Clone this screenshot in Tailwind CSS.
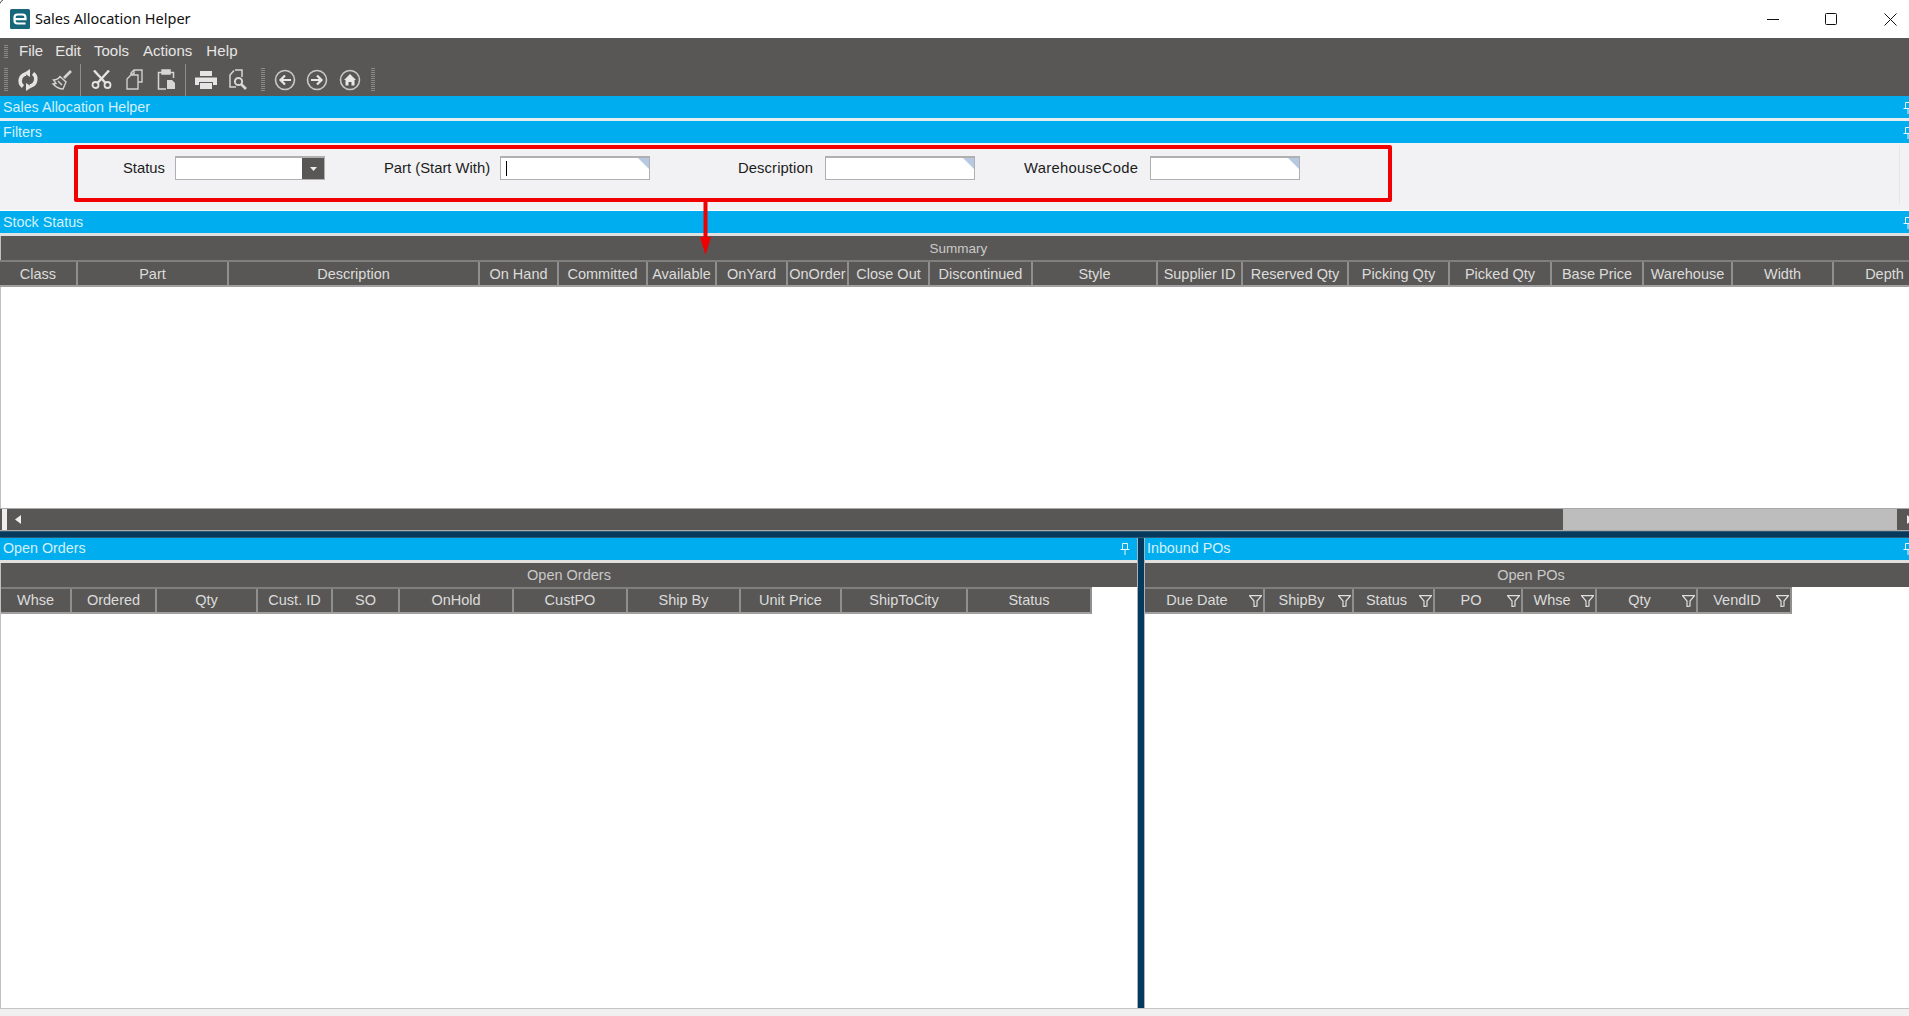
<!DOCTYPE html>
<html lang="en">
<head>
  <meta charset="UTF-8" />
  <title>Sales Allocation Helper</title>
  <script src="https://cdn.jsdelivr.net/npm/@tailwindcss/browser@4"></script>
</head>
<body class="bg-white font-['Liberation_Sans',Arial,sans-serif] text-[14.5px] overflow-hidden">
<div class="relative flex flex-col w-[1909px] h-[1016px] overflow-hidden">

  <!-- Title bar -->
  <header class="h-[38px] shrink-0 flex items-center bg-white">
    <svg class="ml-[10px] w-[20px] h-[20px]" viewBox="0 0 20 20">
      <rect width="20" height="20" rx="1.5" fill="#17667a"/>
      <path d="M15.500 14.500H7.500Q4.500 14.500 4.500 11.500V8.500Q4.500 5.500 7.500 5.500H12.500Q15.500 5.500 15.500 8.500V10.200H5" fill="none" stroke="#fff" stroke-width="2.2"/>
    </svg>
    <span class="ml-[5px] font-['Noto_Sans',sans-serif] text-[14.5px] text-[#111]">Sales Allocation Helper</span>
    <div class="ml-auto flex items-center">
      <svg class="w-[12px] h-[12px] mr-[46px]" viewBox="0 0 12 12"><path d="M0 6.500h12" stroke="#111" stroke-width="1"/></svg>
      <svg class="w-[12px] h-[12px] mr-[47px]" viewBox="0 0 12 12"><rect x=".5" y=".5" width="11" height="11" rx="1" fill="none" stroke="#111"/></svg>
      <svg class="w-[13px] h-[13px] mr-[12px]" viewBox="0 0 13 13"><path d="M.5.500l12 12M12.500.500l-12 12" stroke="#111"/></svg>
    </div>
  </header>
  <svg class="absolute left-0 top-0 w-[4px] h-[4px]" viewBox="0 0 4 4"><path d="M0 3.500Q.5 1 3 0" fill="none" stroke="#555"/></svg>

  <!-- Menu + toolbar -->
  <div class="h-[58px] shrink-0 bg-[#595755] text-[#e6e6e6]">
    <nav class="h-[25px] flex items-center pt-[2px] text-[15px]">
      <span class="ml-[4px] w-[4px] h-[14px] bg-[repeating-linear-gradient(#8a8a88_0_1px,transparent_1px_2px)]"></span>
      <span class="ml-[11px]">File</span>
      <span class="ml-[12px]">Edit</span>
      <span class="ml-[13px]">Tools</span>
      <span class="ml-[14px]">Actions</span>
      <span class="ml-[14px] tracking-[0.2px]">Help</span>
    </nav>
    <div class="h-[33px] flex items-center text-[#e4e4e4]">
      <span class="ml-[4px] w-[4px] h-[24px] bg-[repeating-linear-gradient(#8a8a88_0_1px,transparent_1px_2px)]"></span>
      <!-- refresh -->
      <span class="ml-[4px] w-[32px] flex justify-center">
        <svg class="w-[22px] h-[22px]" viewBox="0 0 22 22" fill="none" stroke="currentColor" stroke-width="3.6"><path d="M9 5A7 7 0 0 0 6 17.500"/><path d="M13 17A7 7 0 0 0 16 4.500"/><path d="M13 0v8L7 4zM9 22v-8l6 4z" fill="currentColor" stroke="none"/></svg>
      </span>
      <!-- broom -->
      <span class="ml-[2px] w-[32px] flex justify-center">
        <svg class="w-[22px] h-[22px]" viewBox="0 0 22 22" fill="none" stroke="#d4d4d4" stroke-width="1.400"><path d="M20 2l-7 7" stroke-width="2.600"/><path d="M9 7.500l6 5.500-3 7q-5 0-10-5l3-.5-2.500-3.500q4 0 6.500-3.500z"/><path d="M7 12l4 4" /></svg>
      </span>
      <span class="ml-[2px] w-px h-[32px] bg-[#8d8d8b]"></span>
      <!-- scissors -->
      <span class="ml-[4px] w-[32px] flex justify-center">
        <svg class="w-[21px] h-[19px]" viewBox="0 0 21 19" fill="none" stroke="currentColor" stroke-width="1.800"><path d="M3 .5l12 13M18 .5L6 13.500" stroke-width="2.400"/><circle cx="4.500" cy="15" r="3"/><circle cx="16.500" cy="15" r="3"/></svg>
      </span>
      <!-- copy -->
      <span class="ml-px w-[32px] flex justify-center">
        <svg class="w-[17px] h-[21px]" viewBox="0 0 17 21" fill="none" stroke="#cfcfcf" stroke-width="1.400"><path d="M5 6V4l3-3h8v12h-4"/><path d="M5 6h7v14H1V10z" fill="#595755"/><path d="M8 1v4H5"/></svg>
      </span>
      <!-- paste -->
      <span class="w-[32px] flex justify-center">
        <svg class="w-[19px] h-[21px]" viewBox="0 0 19 21" fill="none" stroke="#d6d6d6" stroke-width="1.500"><path d="M5 3.500H1.500V20H9M13 3.500h3.500V9"/><rect x="5" y="1" width="8" height="4" fill="#d6d6d6"/><path d="M10 11h5l3 3v6h-8z" fill="#d6d6d6" stroke="none"/></svg>
      </span>
      <span class="ml-[3px] w-px h-[32px] bg-[#8d8d8b]"></span>
      <!-- printer -->
      <span class="ml-[4px] w-[32px] flex justify-center">
        <svg class="w-[22px] h-[20px]" viewBox="0 0 22 20" fill="currentColor"><rect x="5" y="1" width="12" height="5"/><path d="M0 7.500h22V15h-4v-3H4v3H0z"/><rect x="5" y="13" width="12" height="6"/></svg>
      </span>
      <!-- print preview -->
      <span class="w-[32px] flex justify-center">
        <svg class="w-[20px] h-[22px]" viewBox="0 0 20 22" fill="none" stroke="#d6d6d6" stroke-width="1.500"><path d="M7 1h7v7M6 1.500L2 6v12h6"/><circle cx="10.500" cy="12.500" r="3.600" stroke-width="2"/><path d="M13 15l5 5" stroke-width="2.600"/></svg>
      </span>
      <span class="ml-[7px] w-[4px] h-[24px] bg-[repeating-linear-gradient(#8a8a88_0_1px,transparent_1px_2px)]"></span>
      <!-- back -->
      <span class="ml-[4px] w-[32px] flex justify-center">
        <svg class="w-[22px] h-[22px]" viewBox="0 0 22 22" fill="none" stroke="#c9c9c9"><circle cx="11" cy="11" r="9.500" stroke-width="1.600"/><path d="M17 11H7M11 6.500L6.500 11l4.500 4.500" stroke="#e8e8e8" stroke-width="2.200"/></svg>
      </span>
      <!-- forward -->
      <span class="w-[32px] flex justify-center">
        <svg class="w-[22px] h-[22px]" viewBox="0 0 22 22" fill="none" stroke="#c9c9c9"><circle cx="11" cy="11" r="9.500" stroke-width="1.600"/><path d="M5 11h10M11 6.500l4.500 4.500-4.500 4.500" stroke="#e8e8e8" stroke-width="2.200"/></svg>
      </span>
      <!-- home -->
      <span class="ml-px w-[32px] flex justify-center">
        <svg class="w-[22px] h-[22px]" viewBox="0 0 22 22" fill="none" stroke="#c9c9c9"><circle cx="11" cy="11" r="9.500" stroke-width="1.600"/><path d="M11 5l6 6h-1.500v5.500h-3V13h-3v3.500h-3V11H5z" fill="#e8e8e8" stroke="none"/></svg>
      </span>
      <span class="ml-[5px] w-[4px] h-[24px] bg-[repeating-linear-gradient(#8a8a88_0_1px,transparent_1px_2px)]"></span>
    </div>
  </div>

  <!-- Sales Allocation Helper bar -->
  <div class="h-[22px] shrink-0 bg-[#00aeef] text-[#d4f0fb] pl-[3px] pt-px text-[14.3px] flex items-center justify-between">
    <span>Sales Allocation Helper</span>
    <svg class="w-[10px] h-[12px] mr-[-4px]" viewBox="0 0 10 12" fill="none" stroke="#e8f8ff"><path d="M2.500.5h5v6h-5zM.5 6.500h9M5 7v5"/></svg>
  </div>
  <div class="h-[3px] shrink-0 bg-[#e6eef2]"></div>

  <!-- Filters -->
  <div class="h-[22px] shrink-0 bg-[#00aeef] text-[#d4f0fb] pl-[3px] pt-px text-[14.3px] flex items-center justify-between">
    <span>Filters</span>
    <svg class="w-[10px] h-[12px] mr-[-4px]" viewBox="0 0 10 12" fill="none" stroke="#e8f8ff"><path d="M2.500.5h5v6h-5zM.5 6.500h9M5 7v5"/></svg>
  </div>
  <div class="h-[67px] shrink-0 bg-[#f2f2f4] flex items-start pt-[13px] text-[#1c1c1c] text-[14.8px] whitespace-nowrap">
    <span class="ml-[123px] w-[52px] h-[24px] leading-[25px]">Status</span>
    <div class="w-[150px] h-[24px] bg-white border border-[#b0b0b0] border-t-2 flex justify-end">
      <span class="w-[22px] h-full bg-[#595755] flex items-center justify-center"><svg class="w-[7px] h-[4px]" viewBox="0 0 7 4"><path d="M0 0h7L3.500 4z" fill="#eee"/></svg></span>
    </div>
    <span class="ml-[59px] w-[116px] h-[24px] leading-[25px]">Part (Start With)</span>
    <div class="relative w-[150px] h-[24px] bg-white border border-[#b0b0b0] border-t-2">
      <span class="absolute left-[5px] top-[3px] w-px h-[15px] bg-black"></span>
      <span class="absolute right-0 top-0 w-[11px] h-[11px] bg-[#b7c9e2] [clip-path:polygon(0_0,100%_0,100%_100%)]"></span>
    </div>
    <span class="ml-[88px] w-[87px] h-[24px] leading-[25px] tracking-[0.1px]">Description</span>
    <div class="relative w-[150px] h-[24px] bg-white border border-[#b0b0b0] border-t-2">
      <span class="absolute right-0 top-0 w-[11px] h-[11px] bg-[#b7c9e2] [clip-path:polygon(0_0,100%_0,100%_100%)]"></span>
    </div>
    <span class="ml-[49px] w-[126px] h-[24px] leading-[25px] tracking-[0.3px]">WarehouseCode</span>
    <div class="relative w-[150px] h-[24px] bg-white border border-[#b0b0b0] border-t-2">
      <span class="absolute right-0 top-0 w-[11px] h-[11px] bg-[#b7c9e2] [clip-path:polygon(0_0,100%_0,100%_100%)]"></span>
    </div>
    <span class="ml-[599px] mt-[-11px] w-px h-[60px] bg-[#e6e6e8]"></span>
  </div>

  <!-- Stock Status -->
  <div class="mt-px h-[22px] shrink-0 bg-[#00aeef] text-[#d4f0fb] pl-[3px] pt-px text-[14.3px] flex items-center justify-between">
    <span>Stock Status</span>
    <svg class="w-[10px] h-[12px] mr-[-4px]" viewBox="0 0 10 12" fill="none" stroke="#e8f8ff"><path d="M2.500.5h5v6h-5zM.5 6.500h9M5 7v5"/></svg>
  </div>
  <div class="h-[3px] shrink-0 bg-[#e0e0e0]"></div>
  <div class="h-[24px] shrink-0 bg-[#595755] text-[#c9c9c9] text-[13.5px] pt-[3px] pl-[7px] flex items-center justify-center border-l border-[#c0c0c0]">Summary</div>
  <div class="h-[27px] shrink-0 flex bg-[#595755] text-[#dcdcdc] border-y-2 border-t-[#7f7f7e] border-b-[#a0a0a0] text-center leading-[24px] overflow-hidden whitespace-nowrap">
    <div class="w-[78px] shrink-0 border-r-2 border-[#8f8f8f]">Class</div>
    <div class="w-[151px] shrink-0 border-r-2 border-[#8f8f8f]">Part</div>
    <div class="w-[251px] shrink-0 border-r-2 border-[#8f8f8f]">Description</div>
    <div class="w-[79px] shrink-0 border-r-2 border-[#8f8f8f]">On Hand</div>
    <div class="w-[89px] shrink-0 border-r-2 border-[#8f8f8f]">Committed</div>
    <div class="w-[69px] shrink-0 border-r-2 border-[#8f8f8f]">Available</div>
    <div class="w-[71px] shrink-0 border-r-2 border-[#8f8f8f]">OnYard</div>
    <div class="w-[61px] shrink-0 border-r-2 border-[#8f8f8f]">OnOrder</div>
    <div class="w-[81px] shrink-0 border-r-2 border-[#8f8f8f]">Close Out</div>
    <div class="w-[103px] shrink-0 border-r-2 border-[#8f8f8f]">Discontinued</div>
    <div class="w-[125px] shrink-0 border-r-2 border-[#8f8f8f]">Style</div>
    <div class="w-[85px] shrink-0 border-r-2 border-[#8f8f8f]">Supplier ID</div>
    <div class="w-[106px] shrink-0 border-r-2 border-[#8f8f8f]">Reserved Qty</div>
    <div class="w-[101px] shrink-0 border-r-2 border-[#8f8f8f]">Picking Qty</div>
    <div class="w-[102px] shrink-0 border-r-2 border-[#8f8f8f]">Picked Qty</div>
    <div class="w-[92px] shrink-0 border-r-2 border-[#8f8f8f]">Base Price</div>
    <div class="w-[89px] shrink-0 border-r-2 border-[#8f8f8f]">Warehouse</div>
    <div class="w-[101px] shrink-0 border-r-2 border-[#8f8f8f]">Width</div>
    <div class="w-[101px] shrink-0">Depth</div>
  </div>
  <div class="h-[221px] shrink-0 bg-white border-l border-[#c0c0c0]"></div>

  <!-- Horizontal scrollbar -->
  <div class="h-[23px] shrink-0 flex bg-[#595755] border-y border-[#a8a8a8]">
    <span class="ml-[2px] w-[5px] shrink-0 bg-[#eeeeee]"></span>
    <svg class="ml-[8px] mt-[6px] w-[6px] h-[9px] shrink-0" viewBox="0 0 6 9"><path d="M6 0v9L0 4.500z" fill="#eee"/></svg>
    <span class="ml-[1542px] w-[334px] shrink-0 bg-[#bdbdbd]"></span>
    <svg class="ml-[10px] mt-[6px] w-[6px] h-[9px] shrink-0" viewBox="0 0 6 9"><path d="M0 0v9l6-4.500z" fill="#eee"/></svg>
  </div>
  <div class="h-[7px] shrink-0 bg-[#053a5c] border-y border-[#2f5a76]"></div>

  <!-- Bottom panes -->
  <div class="flex-1 flex min-h-0">
    <section class="w-[1137px] shrink-0 flex flex-col">
      <div class="h-[22px] shrink-0 bg-[#00aeef] text-[#d4f0fb] pl-[3px] text-[14.3px] flex items-center justify-between">
        <span>Open Orders</span>
        <svg class="w-[10px] h-[12px] mr-[7px]" viewBox="0 0 10 12" fill="none" stroke="#e8f8ff"><path d="M2.500.5h5v6h-5zM.5 6.500h9M5 7v5"/></svg>
      </div>
      <div class="h-[3px] shrink-0 bg-[#e0e0e0]"></div>
      <div class="h-[24px] shrink-0 bg-[#595755] text-[#c9c9c9] pt-px flex items-center justify-center border-l border-[#c0c0c0]">Open Orders</div>
      <div class="h-[27px] shrink-0 bg-white flex border-l border-[#c0c0c0]">
        <div class="w-[1091px] flex bg-[#595755] text-[#dcdcdc] border-y-2 border-t-[#7f7f7e] border-b-[#a0a0a0] text-center leading-[23px] border-r-2 border-r-[#8f8f8f]">
          <div class="w-[71px] shrink-0 border-r-2 border-[#8f8f8f]">Whse</div>
          <div class="w-[85px] shrink-0 border-r-2 border-[#8f8f8f]">Ordered</div>
          <div class="w-[101px] shrink-0 border-r-2 border-[#8f8f8f]">Qty</div>
          <div class="w-[75px] shrink-0 border-r-2 border-[#8f8f8f]">Cust. ID</div>
          <div class="w-[67px] shrink-0 border-r-2 border-[#8f8f8f]">SO</div>
          <div class="w-[114px] shrink-0 border-r-2 border-[#8f8f8f]">OnHold</div>
          <div class="w-[114px] shrink-0 border-r-2 border-[#8f8f8f]">CustPO</div>
          <div class="w-[113px] shrink-0 border-r-2 border-[#8f8f8f]">Ship By</div>
          <div class="w-[101px] shrink-0 border-r-2 border-[#8f8f8f]">Unit Price</div>
          <div class="w-[126px] shrink-0 border-r-2 border-[#8f8f8f]">ShipToCity</div>
          <div class="flex-1">Status</div>
        </div>
      </div>
      <div class="flex-1 bg-white border-l border-[#c0c0c0]"></div>
    </section>

    <!-- Splitter -->
    <div class="w-[8px] shrink-0 bg-[#053a5c] border-x border-[#a8b4bc]"></div>

    <section class="flex-1 min-w-0 flex flex-col">
      <div class="h-[22px] shrink-0 bg-[#00aeef] text-[#d4f0fb] pl-[2px] text-[14.3px] flex items-center justify-between">
        <span>Inbound POs</span>
        <svg class="w-[10px] h-[12px] mr-[-4px]" viewBox="0 0 10 12" fill="none" stroke="#e8f8ff"><path d="M2.500.5h5v6h-5zM.5 6.500h9M5 7v5"/></svg>
      </div>
      <div class="h-[3px] shrink-0 bg-[#e0e0e0]"></div>
      <div class="h-[24px] shrink-0 bg-[#595755] text-[#c9c9c9] pt-px pl-[8px] flex items-center justify-center">Open POs</div>
      <div class="h-[27px] shrink-0 bg-white flex">
        <div class="w-[647px] flex bg-[#595755] text-[#dcdcdc] border-y-2 border-r-2 border-t-[#7f7f7e] border-b-[#a0a0a0] border-r-[#8f8f8f] text-center leading-[23px]">
          <div class="w-[120px] shrink-0 flex items-center border-r-2 border-[#8f8f8f]"><span class="flex-1">Due Date</span><svg class="w-[13px] h-[12px] mr-px" viewBox="0 0 13 12" fill="none" stroke="#e0e0e0" stroke-width="1.200"><path d="M.5.700h12L8 6v5l-3 .6V6z"/></svg></div>
          <div class="w-[89px] shrink-0 flex items-center border-r-2 border-[#8f8f8f]"><span class="flex-1">ShipBy</span><svg class="w-[13px] h-[12px] mr-px" viewBox="0 0 13 12" fill="none" stroke="#e0e0e0" stroke-width="1.200"><path d="M.5.700h12L8 6v5l-3 .6V6z"/></svg></div>
          <div class="w-[81px] shrink-0 flex items-center border-r-2 border-[#8f8f8f]"><span class="flex-1">Status</span><svg class="w-[13px] h-[12px] mr-px" viewBox="0 0 13 12" fill="none" stroke="#e0e0e0" stroke-width="1.200"><path d="M.5.700h12L8 6v5l-3 .6V6z"/></svg></div>
          <div class="w-[88px] shrink-0 flex items-center border-r-2 border-[#8f8f8f]"><span class="flex-1">PO</span><svg class="w-[13px] h-[12px] mr-px" viewBox="0 0 13 12" fill="none" stroke="#e0e0e0" stroke-width="1.200"><path d="M.5.700h12L8 6v5l-3 .6V6z"/></svg></div>
          <div class="w-[74px] shrink-0 flex items-center border-r-2 border-[#8f8f8f]"><span class="flex-1">Whse</span><svg class="w-[13px] h-[12px] mr-px" viewBox="0 0 13 12" fill="none" stroke="#e0e0e0" stroke-width="1.200"><path d="M.5.700h12L8 6v5l-3 .6V6z"/></svg></div>
          <div class="w-[101px] shrink-0 flex items-center border-r-2 border-[#8f8f8f]"><span class="flex-1">Qty</span><svg class="w-[13px] h-[12px] mr-px" viewBox="0 0 13 12" fill="none" stroke="#e0e0e0" stroke-width="1.200"><path d="M.5.700h12L8 6v5l-3 .6V6z"/></svg></div>
          <div class="flex-1 flex items-center"><span class="flex-1">VendID</span><svg class="w-[13px] h-[12px] mr-px" viewBox="0 0 13 12" fill="none" stroke="#e0e0e0" stroke-width="1.200"><path d="M.5.700h12L8 6v5l-3 .6V6z"/></svg></div>
        </div>
      </div>
      <div class="flex-1 bg-white"></div>
    </section>
  </div>
  <div class="h-[8px] shrink-0 bg-[#f0f0f0] border-t border-[#c4c4c4]"></div>

  <!-- Red annotation over the filter row -->
  <div class="absolute left-[74px] top-[145px] w-[1318px] h-[57px] border-[4px] border-[#f00000] rounded-[2px]"></div>
  <svg class="absolute left-[699px] top-[200px] w-[13px] h-[56px]" viewBox="0 0 13 56">
    <path d="M6.500 0v40" stroke="#f00000" stroke-width="4"/>
    <path d="M1 37h11l-5.500 18z" fill="#f00000"/>
  </svg>
</div>
</body>
</html>
